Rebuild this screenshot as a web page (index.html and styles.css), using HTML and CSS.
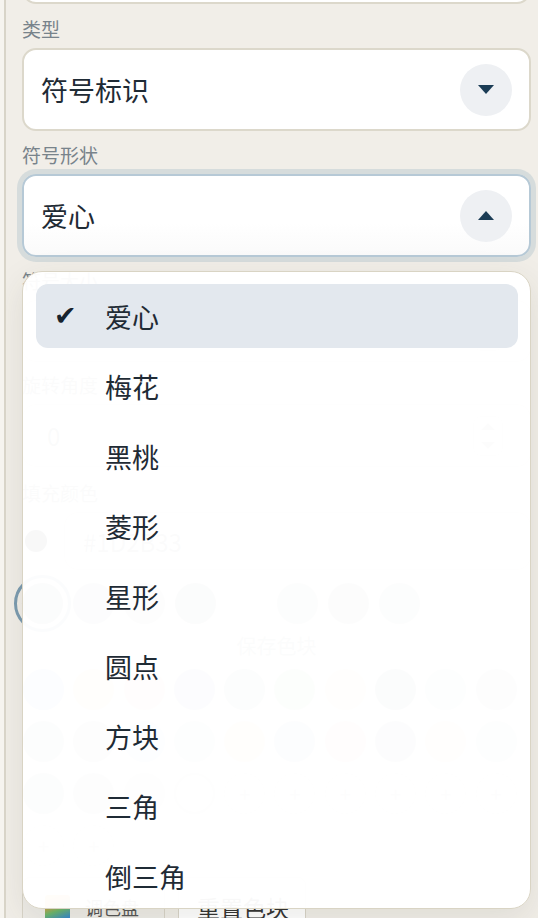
FILE: index.html
```html
<!DOCTYPE html>
<html lang="zh">
<head>
<meta charset="utf-8">
<link rel="stylesheet" href="styles.css">
</head>
<body>
<div class="panel">
  <div class="stub"></div>

  <div class="field first">
    <div class="label">类型</div>
    <div class="select">
      <span class="value">符号标识</span>
      <span class="caret"><svg width="16" height="9" viewBox="0 0 16 9"><path d="M0 0H16L8 9Z" fill="#1b3c55"/></svg></span>
    </div>
  </div>

  <div class="field shape">
    <div class="label">符号形状</div>
    <div class="select open">
      <span class="value">爱心</span>
      <span class="caret"><svg width="16" height="9" viewBox="0 0 16 9"><path d="M0 9H16L8 0Z" fill="#1b3c55"/></svg></span>
    </div>
    <div class="menu">
      <div class="option selected"><span class="check">✔</span><span>爱心</span></div>
      <div class="option"><span class="check"></span><span>梅花</span></div>
      <div class="option"><span class="check"></span><span>黑桃</span></div>
      <div class="option"><span class="check"></span><span>菱形</span></div>
      <div class="option"><span class="check"></span><span>星形</span></div>
      <div class="option"><span class="check"></span><span>圆点</span></div>
      <div class="option"><span class="check"></span><span>方块</span></div>
      <div class="option"><span class="check"></span><span>三角</span></div>
      <div class="option"><span class="check"></span><span>倒三角</span></div>
    </div>
  </div>

  <div class="field">
    <div class="label">符号大小</div>
    <div class="num"><span class="numval">18</span><span class="spin"><i class="up"></i><i class="down"></i></span></div>
  </div>

  <div class="field rot">
    <div class="label">旋转角度</div>
    <div class="num"><span class="numval">0</span><span class="spin"><i class="up"></i><i class="down"></i></span></div>
  </div>

  <div class="field fill">
    <div class="label">填充颜色</div>
    <div class="colorrow">
      <span class="dot"></span>
      <div class="hex">#1D2B33</div>
    </div>
  </div>

  <div class="swatches">
    <span class="sw active" style="background:#8a9095"></span>
    <span class="sw" style="background:#9aa4ac"></span>
    <span class="sw" style="background:#b0b8be"></span>
    <span class="sw" style="background:#8c9096"></span>
    <span class="sw blank"></span>
    <span class="sw" style="background:#a8b4ae"></span>
    <span class="sw" style="background:#a0a4a8"></span>
    <span class="sw" style="background:#a6aeb4"></span>
  </div>

  <div class="save">保存色块</div>

  <div class="grid">
    <span class="sw" style="background:#8fb4e6"></span>
    <span class="sw" style="background:#eccaa0"></span>
    <span class="sw" style="background:#f0c4b4"></span>
    <span class="sw" style="background:#9aa6d4"></span>
    <span class="sw" style="background:#90b8b4"></span>
    <span class="sw" style="background:#a8cca8"></span>
    <span class="sw" style="background:#f2e0b8"></span>
    <span class="sw" style="background:#8a96a2"></span>
    <span class="sw" style="background:#b4d0cc"></span>
    <span class="sw" style="background:#b8bcc2"></span>

    <span class="sw" style="background:#a8b2bc"></span>
    <span class="sw" style="background:#b0b8be"></span>
    <span class="sw" style="background:#b4cdee"></span>
    <span class="sw" style="background:#c0d4da"></span>
    <span class="sw" style="background:#eed4aa"></span>
    <span class="sw" style="background:#a4acd0"></span>
    <span class="sw" style="background:#e4bcbc"></span>
    <span class="sw" style="background:#a0aab0"></span>
    <span class="sw" style="background:#f0d2b8"></span>
    <span class="sw" style="background:#bccad0"></span>

    <span class="sw" style="background:#a8acb2"></span>
    <span class="sw" style="background:#bcc0c4"></span>
    <span class="sw" style="background:#ccd0d4"></span>
    <span class="sw empty"></span>
    <span class="sw plus">+</span>
    <span class="sw plus">+</span>
    <span class="sw plus">+</span>
    <span class="sw plus">+</span>
    <span class="sw plus">+</span>
    <span class="sw plus">+</span>

    <span class="sw plus">+</span>
    <span class="sw plus">+</span>
  </div>

  <div class="actions">
    <div class="btn palette"><span class="rainbow"></span><span>调色盘</span></div>
    <div class="btn reset">重置色块</div>
  </div>
</div>
</body>
</html>
```

FILE: styles.css
```css
html, body {
  margin: 0;
  padding: 0;
}

body {
  background: #f6f4ef;
  font-family: "Noto Sans CJK SC", "Noto Sans", sans-serif;
  color: #1f2b35;
}

.panel {
  margin-left: 4px;
  border-left: 2px solid #d8d4c8;
  background: #f1eee8;
  padding: 0 7px 0 16px;
  height: 918px;
  box-sizing: border-box;
  overflow: hidden;
}

.stub {
  height: 80px;
  margin-top: -76px;
  box-sizing: border-box;
  border: 2px solid #dcd8cb;
  border-radius: 14px;
  background: #fff;
}

.field {
  margin-top: 11px;
  position: relative;
}

.field.first {
  margin-top: 12px;
}

.label {
  font-size: 19px;
  line-height: 26px;
  height: 26px;
  color: #78838b;
  margin-bottom: 6px;
}

.select {
  height: 83px;
  box-sizing: border-box;
  border: 2px solid #dcd8cb;
  border-radius: 14px;
  background: #fff;
  display: flex;
  align-items: center;
  justify-content: space-between;
  padding: 0 17px 0 17px;
}

.select.open {
  border-color: #b6c9d6;
  box-shadow: 0 0 0 5px #d6dcdc;
  background: linear-gradient(#ffffff 60%, #fafafa);
}

.value {
  font-size: 27px;
  line-height: 36px;
  color: #1f2b35;
}

.caret {
  width: 52px;
  height: 52px;
  border-radius: 50%;
  background: #eef0f3;
  display: flex;
  align-items: center;
  justify-content: center;
}

.menu {
  position: absolute;
  top: calc(100% + 14px);
  left: 0;
  right: 0;
  height: 638px;
  box-sizing: border-box;
  border: 1px solid #d9d4c4;
  border-radius: 20px;
  background: rgba(255, 255, 255, 0.97);
  box-shadow: 0 10px 34px rgba(60, 55, 40, 0.10);
  padding: 12px 12px 12px 13px;
  overflow: hidden;
  display: flex;
  flex-direction: column;
  gap: 6px;
  z-index: 10;
}

.option {
  flex: 0 0 64px;
  height: 64px;
  display: flex;
  align-items: center;
  padding-left: 18px;
  border-radius: 12px;
  font-size: 27px;
  color: #1f2b35;
}

.option.selected {
  background: #e3e8ee;
}

.check {
  width: 51px;
  flex: 0 0 51px;
  font-family: "DejaVu Sans", sans-serif;
  font-size: 27px;
  line-height: 36px;
  color: #17232e;
}

/* faint background form */
.num {
  height: 62px;
  box-sizing: border-box;
  border: 1px solid #e0ddd5;
  border-radius: 14px;
  background: #fff;
  display: flex;
  align-items: center;
  justify-content: space-between;
  padding: 0 27px 0 24px;
}

.field.rot {
  margin-top: 10px;
}

.field.rot .num {
  height: 63px;
}

.numval {
  font-size: 24px;
  color: #70787e;
}

.spin {
  width: 28px;
  height: 38px;
  border: 1px solid #e0e0e0;
  border-radius: 8px;
  display: flex;
  flex-direction: column;
  align-items: center;
  justify-content: space-around;
}

.spin i {
  width: 0;
  height: 0;
  border-left: 7px solid transparent;
  border-right: 7px solid transparent;
}

.spin .up {
  border-bottom: 7px solid #999;
}

.spin .down {
  border-top: 7px solid #999;
}

.field.fill {
  margin-top: 13px;
}

.colorrow {
  display: flex;
  align-items: center;
  height: 58px;
  gap: 17px;
}

.dot {
  width: 22px;
  height: 22px;
  margin-left: 3px;
  border-radius: 50%;
  background: #1d2b33;
}

.hex {
  flex: 1;
  height: 58px;
  box-sizing: border-box;
  border: 1px solid #e0ddd5;
  border-radius: 14px;
  background: #fff;
  display: flex;
  align-items: center;
  padding-left: 18px;
  font-size: 24px;
  color: #7d868c;
}

.swatches {
  margin-top: 13px;
  display: flex;
  gap: 10px;
}

.sw {
  width: 41px;
  height: 41px;
  border-radius: 50%;
  flex: 0 0 41px;
  box-sizing: border-box;
}

.sw.active {
  outline: 3px solid #7b9bb0;
  outline-offset: 5px;
}

.sw.blank {
  background: transparent;
}

.save {
  margin-top: 9px;
  height: 26px;
  line-height: 26px;
  text-align: center;
  font-size: 20px;
  color: #8a9298;
}

.grid {
  margin-top: 10px;
  margin-left: 1px;
  display: grid;
  grid-template-columns: repeat(10, 41px);
  column-gap: 9.3px;
  row-gap: 11px;
}

.sw.empty {
  border: 2px solid #d0d0d0;
}

.sw.plus {
  display: flex;
  align-items: center;
  justify-content: center;
  font-size: 20px;
  color: #bbb;
  border: 1px dashed #dedede;
}

.actions {
  margin-top: 11px;
  display: flex;
  gap: 13px;
}

.btn {
  height: 60px;
  box-sizing: border-box;
  border: 1px solid #d8d4c8;
  border-radius: 8px;
  display: flex;
  align-items: center;
}

.btn.palette {
  width: 143px;
  background: #eeece7;
  padding-left: 22px;
  gap: 15px;
  font-size: 18px;
  color: #555;
}

.rainbow {
  width: 25px;
  height: 25px;
  border-radius: 3px;
  background: linear-gradient(160deg, #f6c343 0%, #eb9a3c 30%, #6bb66b 60%, #2a7de1 100%);
}

.btn.reset {
  width: 128px;
  background: #fff;
  padding-left: 18px;
  font-size: 23px;
  color: #333;
}
```
